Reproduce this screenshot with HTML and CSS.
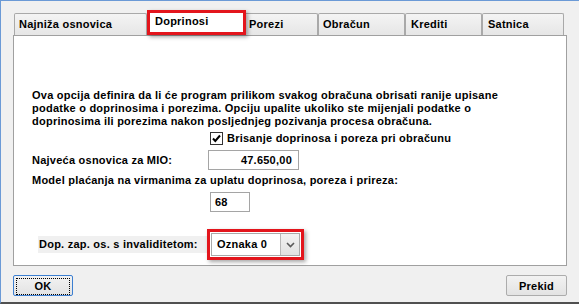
FILE: index.html
```html
<!DOCTYPE html>
<html lang="hr">
<head>
    <meta charset="UTF-8">
    <meta name="viewport" content="width=device-width, initial-scale=1.0">
    <title>Doprinosi</title>
    <link rel="stylesheet" href="styles.css">
</head>
<body>
    <div class="window">
        <div class="tabs">
            <div class="tab tab-osnovica">Najniža osnovica</div>
            <div class="tab tab-active">Doprinosi</div>
            <div class="tab tab-porezi">Porezi</div>
            <div class="tab tab-obracun">Obračun</div>
            <div class="tab tab-krediti">Krediti</div>
            <div class="tab tab-satnica">Satnica</div>
        </div>

        <div class="panel">
            <p class="desc">Ova opcija definira da li će program prilikom svakog obračuna obrisati ranije upisane<br>podatke o doprinosima i porezima. Opciju upalite ukoliko ste mijenjali podatke o<br>doprinosima ili porezima nakon posljednjeg pozivanja procesa obračuna.</p>

            <div class="check-row">
                <span class="check">
                    <svg width="11" height="11" viewBox="0 0 11 11"><path d="M2 5.5 L4.3 8 L9 2.5" fill="none" stroke="#000" stroke-width="2"/></svg>
                </span>
                Brisanje doprinosa i poreza pri obračunu
            </div>

            <div class="field-row">
                <span class="field-label">Najveća osnovica za MIO:</span>
                <div class="textbox textbox-amount">47.650,00</div>
            </div>

            <div class="model-label">Model plaćanja na virmanima za uplatu doprinosa, poreza i prireza:</div>
            <div class="textbox textbox-code">68</div>

            <div class="invalid-row">
                <span class="invalid-label">Dop. zap. os. s invaliditetom:</span>
                <div class="highlight">
                    <div class="combo">
                        <span class="combo-value">Oznaka 0</span>
                        <span class="combo-button">
                            <svg width="9" height="6" viewBox="0 0 9 6"><path d="M1 1 L4.5 4.5 L8 1" fill="none" stroke="#5a5a5a" stroke-width="1.6"/></svg>
                        </span>
                    </div>
                </div>
            </div>
        </div>

        <div class="footer">
            <button class="btn btn-ok"><span class="focus-rect">OK</span></button>
            <button class="btn btn-cancel">Prekid</button>
        </div>
    </div>
</body>
</html>
```

FILE: styles.css
```css
body {
    margin: 0;
    width: 579px;
    height: 304px;
    overflow: hidden;
    background-color: #f0f0f0;
}
.window {
    box-sizing: border-box;
    height: 304px;
    padding-top: 9px;
    background-color: #f0f0f0;
    border-top: 1px solid #6b9ad6;
    border-left: 1px solid #6b9ad6;
    border-bottom: 2px solid #505050;
    font: bold 11px "Liberation Sans", Arial, sans-serif;
    letter-spacing: 0.24px;
    color: #000;
}

/* tab strip */
.tabs {
    display: flex;
    align-items: flex-end;
    height: 25px;
    margin-left: 13px;
    position: relative;
    z-index: 1;
}
.tab {
    box-sizing: border-box;
    height: 22px;
    padding: 4px 0 0 4px;
    line-height: 13px;
    white-space: nowrap;
    border: 1px solid #a9a9a9;
    border-bottom: none;
    border-radius: 2px 2px 0 0;
    background: linear-gradient(#f4f4f4, #e6e6e6);
}
.tab-osnovica { width: 133px; }
.tab-porezi { width: 74px; }
.tab-obracun { width: 87px; }
.tab-krediti { width: 77px; padding-left: 5px; }
.tab-satnica { width: 82px; padding-left: 5px; }
.tab-active {
    width: 99px;
    height: 25px;
    padding: 2px 0 0 5px;
    margin-right: -2px;
    border: 3px solid #e3151c;
    border-radius: 0;
    background: #fff;
    box-shadow: 2px 2px 4px rgba(0,0,0,0.35);
    position: relative;
    z-index: 2;
}

/* page */
.panel {
    box-sizing: border-box;
    width: 554px;
    height: 231px;
    margin-left: 12px;
    padding: 53px 0 0 18px;
    background-color: #fff;
    border: 1px solid #a0a0a0;
    line-height: 13px;
}
.desc {
    margin: 0;
}
.check-row {
    display: flex;
    align-items: center;
    margin: 4px 0 0 178px;
}
.check {
    box-sizing: border-box;
    width: 13px;
    height: 13px;
    margin-right: 4px;
    border: 1px solid #333;
    background: #fff;
    display: flex;
}
.field-row {
    display: flex;
    align-items: center;
    margin-top: 5px;
}
.field-label {
    width: 176px;
}
.textbox {
    box-sizing: border-box;
    height: 20px;
    line-height: 18px;
    border: 1px solid #a5a5a5;
    background: #fff;
}
.textbox-amount {
    width: 91px;
    padding-right: 6px;
    text-align: right;
}
.model-label {
    margin-top: 4px;
}
.textbox-code {
    width: 40px;
    margin: 5px 0 0 178px;
    padding-left: 4px;
}
.invalid-row {
    display: flex;
    align-items: center;
    margin: 17px 0 0 6px;
}
.invalid-label {
    width: 168px;
    height: 17px;
    line-height: 17px;
    padding-left: 1px;
    white-space: nowrap;
    background-color: #f0f0f0;
}
.highlight {
    box-sizing: border-box;
    width: 97px;
    height: 31px;
    padding: 1px;
    border: 3px solid #e3151c;
    box-shadow: 2px 2px 4px rgba(0,0,0,0.35);
    background: #fff;
}
.combo {
    box-sizing: border-box;
    display: flex;
    height: 23px;
    border: 1px solid #a9a9a9;
    background: #fff;
}
.combo-value {
    flex: 1;
    padding-left: 5px;
    line-height: 21px;
}
.combo-button {
    box-sizing: border-box;
    width: 19px;
    display: flex;
    align-items: center;
    justify-content: center;
    border-left: 1px solid #b8b8b8;
    background: linear-gradient(#f2f2f2, #e2e2e2);
}

/* buttons */
.footer {
    display: flex;
    justify-content: space-between;
    align-items: flex-start;
    margin-top: 9px;
    padding: 0 12px 0 12px;
}
.btn {
    box-sizing: border-box;
    height: 21px;
    padding: 0;
    font: bold 11px "Liberation Sans", Arial, sans-serif;
    letter-spacing: 0.24px;
    color: #000;
    border: 1px solid #acacac;
    border-radius: 2px;
    background: linear-gradient(#f2f2f2, #e3e3e3);
}
.btn-ok {
    width: 60px;
    padding: 2px;
    border-color: #3c7fd1;
}
.focus-rect {
    display: block;
    height: 15px;
    line-height: 15px;
    border: 1px dotted #000;
}
.btn-cancel {
    width: 61px;
}
```
